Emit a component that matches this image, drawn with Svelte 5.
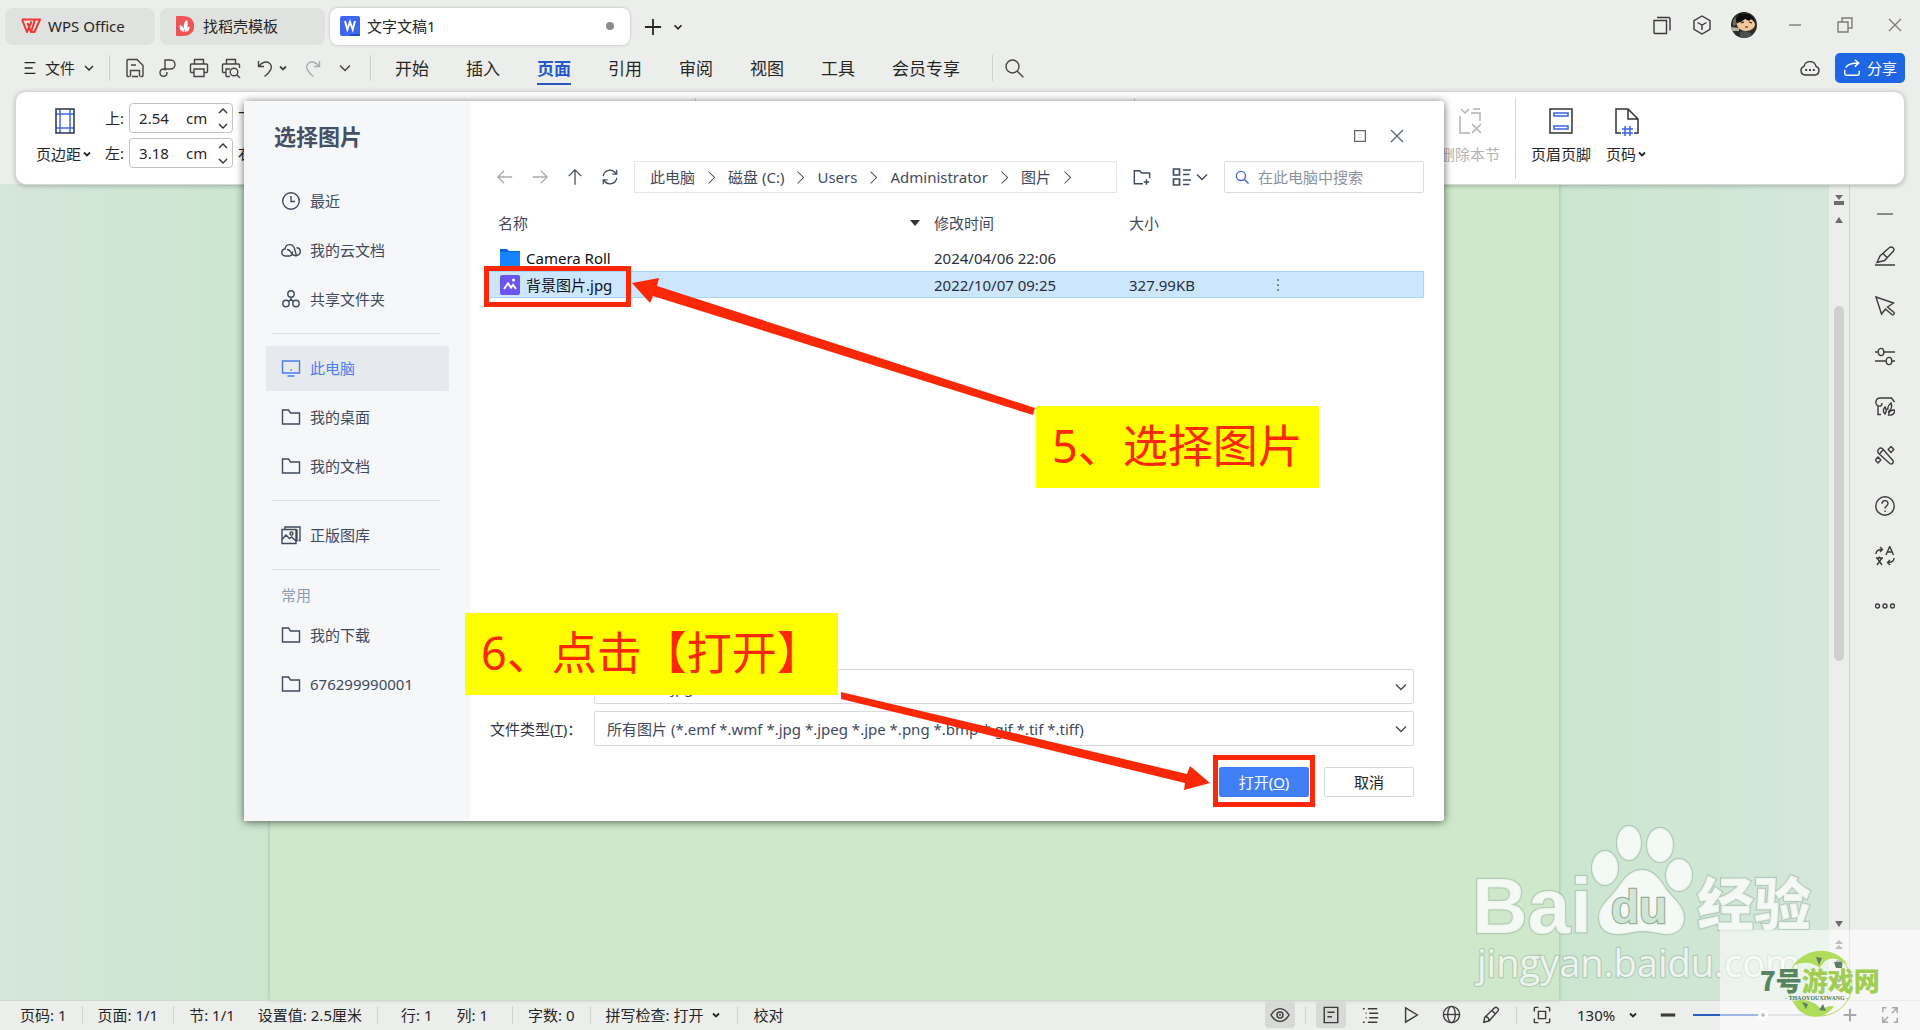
<script lang="ts">
  type SideItem = { icon: string; label: string };

  let activeMenu = 'page';
  let activePlace = '此电脑';
  let fileName = '背景图片.jpg';
  let keyword = '';
  let zoom = 53;
  let top = '2.54';
  let left = '3.18';

  const menus = [
    { id: 'home', label: '开始' },
    { id: 'insert', label: '插入' },
    { id: 'page', label: '页面' },
    { id: 'reference', label: '引用' },
    { id: 'review', label: '审阅' },
    { id: 'view', label: '视图' },
    { id: 'tools', label: '工具' },
    { id: 'vip', label: '会员专享' }
  ];

  const placeGroups: { title?: string; items: SideItem[] }[] = [
    {
      items: [
        { icon: 'clock', label: '最近' },
        { icon: 'cloud', label: '我的云文档' },
        { icon: 'shared', label: '共享文件夹' }
      ]
    },
    {
      items: [
        { icon: 'monitor', label: '此电脑' },
        { icon: 'folder', label: '我的桌面' },
        { icon: 'folder', label: '我的文档' }
      ]
    },
    { items: [{ icon: 'gallery', label: '正版图库' }] },
    {
      title: '常用',
      items: [
        { icon: 'folder', label: '我的下载' },
        { icon: 'folder', label: '676299990001' }
      ]
    }
  ];

  const crumbs = ['此电脑', '磁盘 (C:)', 'Users', 'Administrator', '图片'];

  const files = [
    { kind: 'dir', name: 'Camera Roll', date: '2024/04/06 22:06', size: '', selected: false },
    { kind: 'img', name: '背景图片.jpg', date: '2022/10/07 09:25', size: '327.99KB', selected: true }
  ];

  const sideTools = [
    { icon: 'collapse', label: '收起' },
    { icon: 'highlighter', label: '样式' },
    { icon: 'cursor', label: '选择' },
    { icon: 'sliders', label: '属性' },
    { icon: 'leaf', label: '素材' },
    { icon: 'wand', label: '工具' },
    { icon: 'help', label: '帮助' },
    { icon: 'translate', label: '翻译' },
    { icon: 'more', label: '更多' }
  ];

  // every icon is drawn on a 20x20 grid
  const icons: Record<string, string> = {
    menu: '<path d="M4 4h12M4 10h9M4 16h12"/>',
    chev: '<path d="M5 7.500l5 5 5-5"/>',
    chevRight: '<path d="M6 2l8 8-8 8"/>',
    save: '<path d="M4.500 18.500H3a1 1 0 0 1-1-1v-15a1 1 0 0 1 1-1h9l6 6v10a1 1 0 0 1-1 1h-1.500M5.500 18.500v-6h9v6M6 7h5M7 18.500h6"/>',
    output: '<path d="M8 12.500V2h5.500a4.500 4.500 0 0 1 0 9H6.500a3.500 3.500 0 0 0-3.500 3.700c0 5 7 4.500 7 0V14"/>',
    print: '<path d="M5.500 6V1.500h9V6M5 14.500H2.500a1 1 0 0 1-1-1V7a1 1 0 0 1 1-1h15a1 1 0 0 1 1 1v6.500a1 1 0 0 1-1 1H15M5 11h10v7.500H5z"/>',
    preview: '<path d="M5.500 6V1.500h9V6M5 14.500H2.500a1 1 0 0 1-1-1V7a1 1 0 0 1 1-1h15a1 1 0 0 1 1 1v3M5 18.500V11h4M5 18.500h4"/><circle cx="13" cy="14" r="3.800"/><path d="M16 17l3 3"/>',
    undo: '<path d="M3.500 3v5.500H9M4 8.200C7 4 11.500 2.800 14.500 5.200c4.500 4 0 9.300-5 13.300"/>',
    redo: '<path d="M16.500 3v5.500H11M16 8.200C13 4 8.500 2.800 5.500 5.200c-4.500 4 0 9.300 5 13.300"/>',
    search: '<circle cx="8.500" cy="8.500" r="6.500"/><path d="M13.300 13.300l6 6"/>',
    plus: '<path d="M10 1v18M1 10h18"/>',
    windows: '<path d="M2 5.500h12.500v13H3a1 1 0 0 1-1-1zM5 2.500h12a1 1 0 0 1 1 1v12"/>',
    cube: '<path d="M10 1l8 4.700v8.600L10 19l-8-4.700V5.700zM5.500 7.500L10 10l4.500-2.500M10 10v5"/>',
    minus: '<path d="M4 10h12"/>',
    restore: '<path d="M3 7h10v10H3zM7 7V3h10v10h-4"/>',
    close: '<path d="M4 4l12 12M16 4L4 16"/>',
    square: '<path d="M4 4h12v12H4z"/>',
    cloudDots: '<path d="M5 17a4.500 4.500 0 0 1-1-8.700 6.200 6.200 0 0 1 12 0A4.500 4.500 0 0 1 15 17z"/><path d="M5.300 12h1.800M9.100 12h1.800M12.900 12h1.800" stroke-width="2"/>',
    share: '<path d="M2 12v4.500a1.500 1.500 0 0 0 1.500 1.500h13a1.500 1.500 0 0 0 1.500-1.500V13M3 9.500C5 6 9 4.500 17.500 4.500M13 .8l4.500 3.700L13 8.500"/>',
    clock: '<circle cx="10" cy="10" r="8.300"/><path d="M10 5v5.500h4"/>',
    cloud: '<path d="M8.500 16H4.200C-.3 15.500-.3 9.500 4 9c1-5.500 7.500-6 9.500-.5L15.500 16M8.500 16c3 0 3-2.500 3-4.500M6 9.500c2 0 3 1 4 3 1.500 3 4 3.500 6 3 4.500-1 4.500-7.500-.5-7.700"/>',
    shared: '<circle cx="10" cy="5" r="3.200"/><circle cx="5" cy="14.500" r="3.200"/><circle cx="15" cy="14.500" r="3.200"/><path d="M10 8.200v2L7.500 12.500M10 10.200l2.500 2.300"/>',
    monitor: '<path d="M1.500 3h17v12h-17zM6.500 18h7"/><path d="M9.500 12h1.500"/>',
    folder: '<path d="M1.500 17V3h6l2 3h9v11z"/>',
    gallery: '<path d="M1 4.500h14v14H1zM4 4.500V2h15v13.500h-1.500M16 4.500v12M1 14.500l4-4.500 3.500 3.500 2-1.500 4.500 4"/><circle cx="10.500" cy="8.500" r="1.500"/>',
    back: '<path d="M18 10H2M9 3l-7 7 7 7"/>',
    forward: '<path d="M2 10h16M11 3l7 7-7 7"/>',
    up: '<path d="M10 18.500V2M3 9l7-7 7 7"/>',
    refresh: '<path d="M2.500 9A7.600 7.600 0 0 1 16.500 6M17.500 2v4.800h-4.800M17.500 11A7.600 7.600 0 0 1 3.500 14M2.500 18v-4.800h4.800"/>',
    newFolder: '<path d="M11 17.500H1.500V3h6l2 2.500h9v6M15 12.500v6M12 15.500h6"/>',
    grid: '<path d="M1.500 2h6v6h-6zM1.500 12h6v6h-6zM11 3h8M11 7.500h6.500M11 13h8M11 17.500h6.500" stroke-width="1.700"/>',
    collapse: '<path d="M2 10h16" stroke-width="2"/>',
    highlighter: '<path d="M0 19h20M2 16.500L5 10 14.500 1.500c2.500-1.500 5.500 1 4 3.500L9.500 14.500 2 16.500zM8 7.500l4.500 4.500"/>',
    cursor: '<path d="M1 1l17.500 6-6 4 6.500 5.500c.8 1.500-1 3-2.200 2L10.500 13l-4 5z"/>',
    sliders: '<path d="M0 6h3M9 6h11M0 15h11M17 15h3"/><ellipse cx="6" cy="6" rx="2.800" ry="3.600"/><ellipse cx="14" cy="15" rx="2.800" ry="3.600"/>',
    leaf: '<path d="M6 18.500H3V10C-.5 8 .5 2 5 2h11.500l3 4M3 10c3 .5 4-.5 4-3M10 18c-3-2.500-1-6 0-7 2 3 1.500 5 0 7zM13 14c-1-3 .5-5 3-7 1.500 4 0 7-3 9M13.500 19c0-3 2-5 6.500-5-.5 3.500-3 5.500-6.500 5z"/>',
    wand: '<path d="M3.500 3.500c1-1.800 3-1.800 4-.7L17.500 14c2 2.500-.5 5-2.700 3.500L3.700 7.500c-1-1-1-2.800-.2-4zM4.500 8L8 4M16 .5l2.800 3L16 6.500l-2.800-3zM3 11l2.800 3L3 17 .2 14z"/>',
    help: '<circle cx="10" cy="10" r="9.200"/><path d="M7 7.800C7 3.500 13 3.700 13 7.500c0 2.500-3 2.500-3 5M10 14.500v1.500"/>',
    translate: '<path d="M11 9l3.700-8.500L18.500 9M12.500 6h4.500M1 8c0-3 2-4.500 6-4.500M5 1l2.500 2.500L5 6M19 12c0 3-2 4.500-6 4.500M15 14l-2.500 2.500L15 19M1 12h7M4.500 10.500V12M2 19l5-7M7 19l-5-7"/>',
    more: '<circle cx="2.500" cy="10" r="2"/><circle cx="10" cy="10" r="2"/><circle cx="17.500" cy="10" r="2"/>',
    eye: '<path d="M1 10c5-8.500 13-8.500 18 0-5 8.500-13 8.500-18 0z"/><circle cx="10" cy="10" r="3"/><path d="M10 9v2"/>',
    doc: '<path d="M2.500 1.500h15v17h-15zM6 7h8M6 12h5"/>',
    list: '<path d="M1 3h2M6.500 3H17M4 8h1M8 8h10M4 13h1M8 13h10M1 18h2M6.500 18H17"/>',
    play: '<path d="M4 2l13 8-13 8z"/>',
    globe: '<circle cx="10" cy="10" r="8.500"/><ellipse cx="10" cy="10" rx="4" ry="8.500"/><path d="M1.500 10h17"/>',
    pen: '<path d="M2 18l1-5.500L14 2c2-1.500 5 1 4 3.200L8 16.500 2 18zM3.500 12c2.500-.5 4 1.500 4 4M11 5l4 4"/>',
    fit: '<path d="M1.500 6V2.500a1 1 0 0 1 1-1H6M14 1.500h3.500a1 1 0 0 1 1 1V6M18.500 14v3.500a1 1 0 0 1-1 1H14M6 18.500H2.500a1 1 0 0 1-1-1V14M6 6h8v8H6z"/>',
    full: '<path d="M12 2h6v6M18 2l-6 6M8 18H2v-6M2 18l6-6M2 7V2h4M18 13v5h-4"/>'
  };
</script>

{#snippet icon(name: string, size = 20, stroke = 1.4)}
  <svg class="icon" width={size} height={size} viewBox="0 0 20 20" stroke-width={stroke} aria-hidden="true">
    {@html icons[name]}
  </svg>
{/snippet}

<div class="app">
  <header class="titlebar">
    <div class="tabs">
      <button class="tab tab-home">
        <svg width="20" height="16" viewBox="0 0 20 16" aria-hidden="true">
          <path d="M1 1.500h13L10 14 6.500 5M1 1.500L6 14 10.500 3.500M10 14h3.500L19 1.500h-5" fill="none" stroke="#ee3a30" stroke-width="2" stroke-linejoin="round" />
        </svg>
        WPS Office
      </button>
      <button class="tab tab-store">
        <svg width="18" height="20" viewBox="0 0 18 20" aria-hidden="true">
          <path d="M1 0h6c15 0 15 20 0 20H1a1 1 0 0 1-1-1V1a1 1 0 0 1 1-1z" fill="#ec5458" />
          <path d="M8.500 16C4 15 3 12 4 9c3 1 4.500 3 4.500 7zM8.500 14C7 9 8 6 11 4c1.500 4 1 8-2.500 10zM9 16c0-3 1.500-4.500 4.500-5.500.5 3-1 5-4.500 5.500z" fill="#fff" />
        </svg>
        找稻壳模板
      </button>
      <button class="tab tab-doc">
        <svg width="20" height="20" viewBox="0 0 20 20" aria-hidden="true">
          <rect width="20" height="20" rx="2" fill="#3f66ee" />
          <path d="M10 18h10v2H10z" fill="#254bc4" />
          <path d="M5 5l2.300 8.500L10 6l2.700 7.500L15 5" fill="none" stroke="#fff" stroke-width="2" />
        </svg>
        文字文稿1
        <span class="unsaved"></span>
      </button>
      <button class="tab-add" aria-label="新建">{@render icon('plus', 18, 2)}</button>
      <button class="tab-add" aria-label="标签列表">{@render icon('chev', 14, 2.4)}</button>
    </div>
    <div class="window-tools">
      <button class="tool" aria-label="窗口">{@render icon('windows', 20)}</button>
      <button class="tool" aria-label="应用">{@render icon('cube', 20)}</button>
      <svg class="avatar" width="26" height="26" viewBox="0 0 26 26" role="img" aria-label="头像">
        <clipPath id="face"><circle cx="13" cy="13" r="13" /></clipPath>
        <g clip-path="url(#face)">
          <path d="M0 0h26v26H0z" fill="#2c2d2b" />
          <path d="M0 15l8 1v3H0z" fill="#b9b2a4" />
          <path d="M2 8l4-4 1 8-5 2z" fill="#6d6b55" />
          <ellipse cx="15" cy="12.500" rx="9" ry="6.500" fill="#f3c79a" />
          <path d="M5 9C4 3 10 0 15 2c5 0 8 3 9 8l-4-3-2 2-4-2-4 3-4 1z" fill="#0d0d0d" />
          <path d="M10 11l3-1M18 10l3 1M14 15l3 0" stroke="#222" stroke-width="1.200" />
          <path d="M9 20l5-1 6 2v5H9z" fill="#4d4f50" />
        </g>
      </svg>
      <button class="win" aria-label="最小化">{@render icon('minus', 20)}</button>
      <button class="win" aria-label="还原">{@render icon('restore', 20)}</button>
      <button class="win" aria-label="关闭">{@render icon('close', 20)}</button>
    </div>
  </header>

  <div class="menubar">
    <button class="file-menu">{@render icon('menu', 18, 1.6)}文件{@render icon('chev', 16, 1.6)}</button>
    <span class="sep"></span>
    <div class="quick">
      <button aria-label="保存">{@render icon('save')}</button>
      <button aria-label="输出为PDF">{@render icon('output')}</button>
      <button aria-label="打印">{@render icon('print')}</button>
      <button aria-label="打印预览">{@render icon('preview')}</button>
      <button class="undo" aria-label="撤销">{@render icon('undo')}{@render icon('chev', 12, 3)}</button>
      <button class="faded" aria-label="恢复">{@render icon('redo')}</button>
      <button aria-label="更多命令">{@render icon('chev', 20, 1.4)}</button>
    </div>
    <span class="sep"></span>
    <nav class="menus">
      {#each menus as menu (menu.id)}
        <button class:active={menu.id === activeMenu} on:click={() => (activeMenu = menu.id)}>{menu.label}</button>
      {/each}
    </nav>
    <span class="sep"></span>
    <button class="find" aria-label="搜索">{@render icon('search')}</button>
    <div class="menubar-end">
      <button class="tool" aria-label="云同步">{@render icon('cloudDots')}</button>
      <button class="share">{@render icon('share', 18, 1.6)}分享</button>
    </div>
  </div>

  <section class="ribbon">
    <div class="group group-margins">
      <button class="big">
        <svg width="20" height="26" viewBox="0 0 20 26" fill="none" aria-hidden="true">
          <path d="M5 1v24M15 1v24M1 6h18M1 20h18" stroke="#4169e1" stroke-width="1.500" />
          <path d="M1 1h18v24H1z" stroke="#2d3350" stroke-width="1.500" />
        </svg>
        <span>页边距{@render icon('chev', 12, 3)}</span>
      </button>
      <div class="margins">
        <label for="m-top">上:</label>
        <div class="spin">
          <input id="m-top" bind:value={top} /><span>cm</span>
          <div class="steps">
            <button aria-label="增大上边距"><svg width="10" height="6" viewBox="0 0 10 6"><path d="M1 5l4-4 4 4" /></svg></button>
            <button aria-label="减小上边距"><svg width="10" height="6" viewBox="0 0 10 6"><path d="M1 1l4 4 4-4" /></svg></button>
          </div>
        </div>
        <span>下:</span>
        <label for="m-left">左:</label>
        <div class="spin">
          <input id="m-left" bind:value={left} /><span>cm</span>
          <div class="steps">
            <button aria-label="增大左边距"><svg width="10" height="6" viewBox="0 0 10 6"><path d="M1 5l4-4 4 4" /></svg></button>
            <button aria-label="减小左边距"><svg width="10" height="6" viewBox="0 0 10 6"><path d="M1 1l4 4 4-4" /></svg></button>
          </div>
        </div>
        <span>右:</span>
      </div>
    </div>
    <div class="group group-paper"></div>
    <div class="group group-section">
      <button class="big" disabled>
        <svg width="24" height="26" viewBox="0 0 24 26" fill="none" stroke="currentColor" stroke-width="1.500" aria-hidden="true">
          <path d="M3 1l4 4 4-4M15 1h7M13 5h9v8M2 8v17h10M14 16l9 9M23 16l-9 9" />
        </svg>
        <span>删除本节</span>
      </button>
    </div>
    <div class="group">
      <button class="big">
        <svg width="24" height="26" viewBox="0 0 24 26" fill="none" stroke-width="1.500" aria-hidden="true">
          <path d="M1 1h22v24H1z" stroke="#333" />
          <path d="M5 5h14v3H5zM5 18h14v3H5z" stroke="#3b61e6" />
        </svg>
        <span>页眉页脚</span>
      </button>
      <button class="big">
        <svg width="24" height="26" viewBox="0 0 24 26" fill="none" stroke-width="1.500" overflow="visible" aria-hidden="true">
          <path d="M6 25H1V1h12l10 10v14h-4M13 1v10h10" stroke="#333" />
          <path d="M10 18v10M15 18v10M7 21h11M7 25h11" stroke="#3b61e6" />
        </svg>
        <span>页码{@render icon('chev', 12, 3)}</span>
      </button>
    </div>
  </section>

  <main class="workspace">
    <div class="canvas"><div class="sheet"></div></div>
    <div class="scrollbar">
      <svg width="12" height="12" viewBox="0 0 12 12"><path d="M2 1h8L6 6zM1 7h10v4H1z" /></svg>
      <svg width="12" height="12" viewBox="0 0 12 12"><path d="M2 9l4-6 4 6z" /></svg>
      <span class="thumb"></span>
      <svg class="to-end" width="12" height="12" viewBox="0 0 12 12"><path d="M2 3h8L6 9z" /></svg>
      <svg width="12" height="12" viewBox="0 0 12 12"><path d="M2 6l4-4 4 4zM2 11l4-4 4 4z" /></svg>
      <svg width="12" height="12" viewBox="0 0 12 12"><circle cx="6" cy="6" r="4" /></svg>
      <svg width="12" height="12" viewBox="0 0 12 12"><path d="M2 1l4 4 4-4zM2 6l4 4 4-4z" /></svg>
    </div>
    <aside class="side-tools">
      {#each sideTools as tool (tool.icon)}
        <button aria-label={tool.label}>{@render icon(tool.icon)}</button>
      {/each}
    </aside>
  </main>

  <footer class="status">
    <span>页码: 1</span><i></i>
    <span>页面: 1/1</span><i></i>
    <span>节: 1/1</span>
    <span class="loose">设置值: 2.5厘米</span><i></i>
    <span class="loose">行: 1</span>
    <span class="column">列: 1</span><i></i>
    <span>字数: 0</span><i></i>
    <button class="spell">拼写检查: 打开{@render icon('chev', 12, 3)}</button><i></i>
    <button>校对</button>
    <div class="view-tools">
      <button class="view on" aria-label="护眼模式">{@render icon('eye')}</button>
      <i></i>
      <button class="view on" aria-label="页面视图">{@render icon('doc', 18, 1.6)}</button>
      <button class="view" aria-label="大纲">{@render icon('list', 18, 1.6)}</button>
      <button class="view" aria-label="阅读版式">{@render icon('play', 18, 1.6)}</button>
      <button class="view" aria-label="Web版式">{@render icon('globe', 19)}</button>
      <button class="view" aria-label="写作模式">{@render icon('pen', 18, 1.6)}</button>
      <i></i>
      <button class="view" aria-label="最佳显示比例">{@render icon('fit', 18, 1.6)}</button>
      <button class="percent">130%{@render icon('chev', 12, 3)}</button>
      <button class="view" aria-label="缩小">{@render icon('minus', 24, 2.6)}</button>
      <input class="slider" type="range" aria-label="显示比例" bind:value={zoom} style="--fill: {zoom}%" />
      <button class="view" aria-label="放大">{@render icon('plus', 14, 3)}</button>
      <button class="view" aria-label="全屏">{@render icon('full', 18, 1.6)}</button>
    </div>
  </footer>

  <div class="dialog" role="dialog" aria-labelledby="dialog-title">
    <aside class="places">
      <h1 id="dialog-title">选择图片</h1>
      {#each placeGroups as group}
        <section>
          {#if group.title}
            <h2>{group.title}</h2>
          {/if}
          {#each group.items as item (item.label)}
            <button class="place" class:current={item.label === activePlace} on:click={() => (activePlace = item.label)}>
              {@render icon(item.icon)}{item.label}
            </button>
          {/each}
        </section>
      {/each}
    </aside>

    <div class="browser">
      <div class="dialog-controls">
        <button aria-label="最大化">{@render icon('square', 18)}</button>
        <button aria-label="关闭">{@render icon('close', 20)}</button>
      </div>

      <div class="nav">
        <button class="nav-btn faded" aria-label="后退">{@render icon('back', 18)}</button>
        <button class="nav-btn faded" aria-label="前进">{@render icon('forward', 18)}</button>
        <button class="nav-btn" aria-label="向上">{@render icon('up', 18, 1.4)}</button>
        <button class="nav-btn" aria-label="刷新">{@render icon('refresh', 18, 1.4)}</button>
        <div class="crumbs">
          {#each crumbs as crumb}
            <button>{crumb}</button>{@render icon('chevRight', 15, 1.4)}
          {/each}
        </div>
        <button class="nav-btn new-folder" aria-label="新建文件夹">{@render icon('newFolder', 18, 1.6)}</button>
        <button class="layout" aria-label="视图">{@render icon('grid')}{@render icon('chev', 20, 1.4)}</button>
        <div class="search">
          <label for="keyword" aria-label="搜索">{@render icon('search', 14, 2)}</label>
          <input id="keyword" placeholder="在此电脑中搜索" bind:value={keyword} />
        </div>
      </div>

      <div class="files">
        <table>
          <thead>
            <tr>
              <th class="c-name"><div>名称<svg width="10" height="6" viewBox="0 0 10 6"><path d="M0 0h10L5 6z" /></svg></div></th>
              <th class="c-date">修改时间</th>
              <th class="c-size">大小</th>
              <th class="c-more"></th>
            </tr>
          </thead>
          <tbody>
            {#each files as file (file.name)}
              <tr class:selected={file.selected}>
                <td class="c-name">
                  <div>
                    {#if file.kind === 'dir'}
                      <svg width="20" height="20" viewBox="0 0 20 20"><path d="M0 1h7l2 2h11v17H0z" fill="#0b63d8" /><path d="M0 4h20v16H0z" fill="#1484ff" /></svg>
                    {:else}
                      <svg width="20" height="20" viewBox="0 0 20 20"><rect width="20" height="20" rx="2" fill="#6a55f2" /><path d="M4 14l4-5.500 3 4 2-2.500 3 4" fill="none" stroke="#fff" stroke-width="2" /><circle cx="13.500" cy="5" r="1.500" fill="#fff" /></svg>
                    {/if}
                    {file.name}
                  </div>
                </td>
                <td>{file.date}</td>
                <td>{file.size}</td>
                <td class="c-more">
                  {#if file.selected}
                    <svg width="4" height="14" viewBox="0 0 4 14"><path d="M1 1h2v2H1zM1 6h2v2H1zM1 11h2v2H1z" /></svg>
                  {/if}
                </td>
              </tr>
            {/each}
          </tbody>
        </table>
      </div>

      <form class="form" on:submit|preventDefault>
        <div class="field">
          <input aria-label="文件名称" bind:value={fileName} />
          {@render icon('chev', 20, 1.4)}
        </div>
        <label for="file-type">文件类型(<u>T</u>)：</label>
        <div class="field">
          <select id="file-type">
            <option>所有图片 (*.emf *.wmf *.jpg *.jpeg *.jpe *.png *.bmp *.gif *.tif *.tiff)</option>
          </select>
          {@render icon('chev', 20, 1.4)}
        </div>
        <div class="actions">
          <button class="btn primary" type="submit">打开(<u>O</u>)</button>
          <button class="btn" type="button">取消</button>
        </div>
      </form>
    </div>

    <div class="mark mark-file"></div>
    <div class="mark mark-open"></div>
    <svg class="arrows" width="1200" height="720" viewBox="0 0 1200 720" aria-hidden="true">
      <path d="M388 182l27-5-2 8 378 122-2 7-380-119-3 7z" />
      <path d="M597 591l346 82 3-8 20 17-26 7 1-7-344-84z" />
    </svg>
    <div class="callout callout-pick">5、选择图片</div>
    <div class="callout callout-open">6、点击【打开】</div>
  </div>

  <svg class="watermark" width="480" height="230" viewBox="0 0 480 230" aria-hidden="true">
    <g fill="#fff" fill-opacity=".76" stroke="#8aa392" stroke-opacity=".4" stroke-width="2.400" paint-order="stroke">
      <text class="latin" x="32" y="133" font-size="77">Bai</text>
      <ellipse cx="165" cy="68" rx="13" ry="17" />
      <ellipse cx="189" cy="43" rx="12" ry="17" />
      <ellipse cx="220" cy="45" rx="13" ry="17" />
      <ellipse cx="239" cy="75" rx="13" ry="16" />
      <path d="M202 70c12 0 18 10 24 19s18 16 18 29c0 12-10 17-20 16-8-1-14-3-22-3s-14 3-22 3c-12 1-21-5-21-16 0-13 11-19 18-29s13-19 25-19z" />
      <text class="latin" x="171" y="123" font-size="46" fill="#cfe5d6" fill-opacity="1" stroke-opacity=".9">du</text>
      <text class="han" x="257" y="125" font-size="57">经验</text>
      <text class="url" x="37" y="177" font-size="38">jingyan.baidu.com</text>
    </g>
    <path d="M280 130h200v100H280z" fill="#fff" fill-opacity=".55" />
    <circle cx="380" cy="184" r="32" fill="none" stroke="#b3dc62" stroke-width="1" />
    <path d="M353 166c14-20 42-20 55-1-12-9-22-9-28 3-8-6-17-7-27-2zM353 201c12-3 22 0 29 9 5-4 7-4 12-4-9 15-33 15-41-5z" fill="#b0dc5c" />
    <path d="M376 157l6 1-3 7zM394 162h8v6h-6zM362 202l6 2-2 5zM379 210l4-6 3 7z" fill="#5c8065" />
    <text class="brand" x="320" y="191" font-size="26"><tspan fill="#568462">7号</tspan><tspan fill="#9fce52">游戏网</tspan></text>
    <text class="brand-sub" x="345" y="200" font-size="6">- THAOYOUXIWANG -</text>
  </svg>
</div>

<style>
  :global(body) {
    margin: 0;
    background: #eceeeb;
  }

  .app {
    position: relative;
    min-height: 100vh;
    display: flex;
    flex-direction: column;
    overflow: hidden;
    background: #eceeeb;
    color: #262626;
    font: 15px/20px 'Noto Sans', 'Noto Sans CJK SC', sans-serif;
  }

  button,
  input,
  select {
    margin: 0;
    padding: 0;
    border: 0;
    background: none;
    color: inherit;
    font: inherit;
  }

  button {
    display: flex;
    align-items: center;
    justify-content: center;
    white-space: nowrap;
  }

  svg {
    flex: none;
  }

  .icon {
    display: block;
    fill: none;
    stroke: currentColor;
  }

  .titlebar {
    display: flex;
    justify-content: space-between;
    height: 45px;
  }

  .tabs {
    display: flex;
    gap: 5px;
    padding: 8px 0 0 5px;
  }

  .tab {
    height: 37px;
    justify-content: flex-start;
    gap: 7px;
    padding: 0 16px 1px;
    border-radius: 8px;
    background: #e0e2df;
  }

  .tab-home {
    width: 150px;
  }

  .tab-store {
    width: 165px;
    gap: 9px;
  }

  .tab-doc {
    width: 300px;
    padding: 0 16px 1px 10px;
    background: #fff;
    box-shadow: 0 0 3px rgba(0, 0, 0, 0.25);
  }

  .unsaved {
    width: 8px;
    height: 8px;
    margin-left: auto;
    border-radius: 50%;
    background: #8c8c8c;
  }

  .tab-add {
    margin-left: 9px;
  }

  .tab-add + .tab-add {
    margin-left: 4px;
  }

  .window-tools {
    display: flex;
    align-items: center;
    height: 50px;
  }

  .tool {
    width: 40px;
    height: 30px;
    color: #3a3a3a;
  }

  .avatar {
    margin: 0 13px 0 9px;
  }

  .win {
    width: 50px;
    height: 40px;
    color: #7c7c7c;
  }

  .menubar {
    display: flex;
    align-items: center;
    height: 46px;
    padding: 0 15px 0 21px;
  }

  .file-menu {
    gap: 6px;
  }

  .sep {
    width: 1px;
    height: 26px;
    background: #cfd1ce;
  }

  .file-menu + .sep {
    margin: 0 9px 0 12px;
  }

  .quick {
    display: flex;
    margin-right: 9px;
    color: #444;
  }

  .quick button {
    width: 32px;
    height: 30px;
  }

  .quick .undo {
    width: 50px;
    gap: 2px;
  }

  .faded {
    color: #a9abac;
  }

  .menus {
    display: flex;
    gap: 37px;
    margin: 0 32px 0 24px;
    font-size: 17px;
  }

  .menus button {
    height: 34px;
    border-bottom: 2px solid transparent;
    border-top: 4px solid transparent;
  }

  .menus .active {
    border-bottom-color: #2a57b8;
    color: #2458cc;
    font-weight: 700;
  }

  .find {
    margin-left: 11px;
    color: #444;
  }

  .menubar-end {
    display: flex;
    align-items: center;
    gap: 5px;
    margin-left: auto;
  }

  .share {
    width: 70px;
    height: 30px;
    gap: 6px;
    border-radius: 5px;
    background: #1f66e5;
    color: #fff;
  }

  .ribbon {
    z-index: 1;
    display: flex;
    box-sizing: border-box;
    height: 94px;
    margin: 0 15px;
    padding: 6px 0 5px;
    border: 1px solid #d7d9d6;
    border-radius: 11px;
    background: #fff;
    box-shadow: 0 1px 4px rgba(0, 0, 0, 0.25);
  }

  .group {
    display: flex;
    align-items: flex-start;
    gap: 15px;
    padding: 10px 15px;
    border-right: 1px solid #d5d7d8;
  }

  .group:last-child {
    border: 0;
  }

  .group-margins {
    box-sizing: border-box;
    width: 680px;
    padding: 5px 20px;
    gap: 12px;
  }

  .group-margins .big {
    margin-top: 5px;
  }

  .group-paper {
    box-sizing: border-box;
    width: 439px;
  }

  .group-section {
    box-sizing: border-box;
    width: 381px;
    justify-content: flex-end;
  }

  .big {
    flex-direction: column;
    gap: 10px;
  }

  .big:disabled {
    color: #b3b3b3;
  }

  .big span {
    display: flex;
    align-items: center;
  }

  .margins {
    display: grid;
    grid-template-columns: auto 104px auto;
    align-items: center;
    gap: 5px;
  }

  .spin {
    display: flex;
    align-items: center;
    box-sizing: border-box;
    height: 30px;
    padding: 0 4px 0 9px;
    border: 1px solid #bfc1c4;
    border-radius: 4px;
  }

  .spin input {
    width: 47px;
  }

  .steps {
    display: flex;
    flex-direction: column;
    gap: 9px;
    margin-left: auto;
  }

  .steps path {
    fill: none;
    stroke: #333;
    stroke-width: 1.4;
  }

  .workspace {
    flex: 1;
    display: flex;
    margin-top: -1px;
  }

  .canvas {
    flex: 1;
    display: flex;
    justify-content: center;
    background: linear-gradient(90deg, #d5e6da, #cbe6cf 14%, #cbe6d0 86%, #d5e7da);
  }

  .sheet {
    width: 70.5%;
    background: #cfe8cb;
    box-shadow: 0 0 4px rgba(90, 110, 90, 0.4);
  }

  .scrollbar {
    width: 20px;
    display: flex;
    flex-direction: column;
    align-items: center;
    gap: 8px;
    padding: 10px 0;
    border-right: 1px solid #cfd1ce;
  }

  .scrollbar svg {
    fill: #6e6e6e;
  }

  .thumb {
    width: 10px;
    height: 355px;
    margin-top: 72px;
    border-radius: 5px;
    background: #cfd1ce;
  }

  .to-end {
    margin-top: auto;
  }

  .side-tools {
    width: 70px;
    display: flex;
    flex-direction: column;
    align-items: center;
    padding-top: 12px;
    color: #3c3c3c;
  }

  .side-tools button {
    width: 50px;
    height: 50px;
  }

  .side-tools button:first-child {
    height: 35px;
    color: #8a8a8a;
  }

  .status {
    display: flex;
    align-items: center;
    box-sizing: border-box;
    height: 30px;
    padding: 0 15px 2px 20px;
    border-top: 1px solid #d2d6d1;
    white-space: nowrap;
  }

  .status i {
    width: 1px;
    height: 18px;
    margin: 0 15px;
    background: #d0d2cf;
  }

  .loose {
    margin-left: 23px;
  }

  i + .loose {
    margin-left: 8px;
  }

  .column {
    margin: 0 9px 0 24px;
  }

  .spell {
    gap: 7px;
  }

  .view-tools {
    display: flex;
    align-items: center;
    gap: 10px;
    height: 100%;
    margin-left: auto;
  }

  .view-tools i {
    margin: 0;
  }

  .view {
    width: 30px;
    height: 27px;
    color: #3c3c3c;
  }

  .view.on {
    border-radius: 4px;
    background: #d8dad7;
  }

  .percent {
    width: 76px;
    padding-left: 10px;
    box-sizing: border-box;
    gap: 12px;
    justify-content: flex-start;
  }

  .slider {
    appearance: none;
    width: 132px;
    height: 12px;
  }

  .slider::-webkit-slider-runnable-track {
    height: 2px;
    background: linear-gradient(90deg, #2a5fc4 var(--fill), #c2c4c6 var(--fill));
  }

  .slider::-webkit-slider-thumb {
    appearance: none;
    width: 10px;
    height: 10px;
    margin-top: -4px;
    border: 3px solid #fff;
    border-radius: 50%;
    background: #7d7d7d;
  }

  .dialog {
    position: absolute;
    z-index: 2;
    top: 101px;
    left: 244px;
    width: 1200px;
    min-height: 720px;
    display: flex;
    border-radius: 3px;
    background: #fff;
    box-shadow: 0 1px 9px rgba(0, 0, 0, 0.6);
    color: #3f4a5e;
  }

  .places {
    box-sizing: border-box;
    width: 226px;
    padding: 22px 21px 0 22px;
    background: #f5f7f9;
  }

  h1 {
    margin: 0 0 30px 8px;
    color: #435066;
    font-size: 22px;
    line-height: 26px;
  }

  .places section {
    position: relative;
    display: flex;
    flex-direction: column;
    gap: 4px;
    padding-bottom: 24px;
  }

  .places section:not(:last-child)::after {
    content: '';
    position: absolute;
    right: 9px;
    bottom: 12px;
    left: 6px;
    height: 1px;
    background: #dde1e6;
  }

  h2 {
    margin: 3px 0 4px 15px;
    color: #8d9bb0;
    font-weight: 400;
    font-size: 15px;
    line-height: 20px;
  }

  .place {
    height: 45px;
    justify-content: flex-start;
    gap: 9px;
    padding: 0 0 2px 15px;
    border-radius: 2px;
  }

  .place.current {
    background: #e6e9ed;
    color: #4a7eec;
  }

  .browser {
    flex: 1;
    min-width: 0;
    display: flex;
    flex-direction: column;
    padding: 10px 20px 24px 15px;
  }

  .dialog-controls {
    display: flex;
    justify-content: flex-end;
    height: 50px;
    padding-right: 9px;
    color: #5c6675;
  }

  .dialog-controls button {
    width: 37px;
  }

  .nav {
    display: flex;
    align-items: center;
    height: 32px;
    padding-left: 2px;
  }

  .nav-btn {
    width: 35px;
    height: 32px;
  }

  .crumbs {
    flex: 1;
    display: flex;
    align-items: center;
    gap: 9px;
    box-sizing: border-box;
    height: 32px;
    margin: 0 7px;
    padding-left: 15px;
    border: 1px solid #e3e6ea;
  }

  .layout {
    width: 65px;
    gap: 0;
  }

  .search {
    display: flex;
    align-items: center;
    gap: 9px;
    box-sizing: border-box;
    width: 200px;
    height: 32px;
    padding: 0 10px;
    border: 1px solid #d9dde2;
    border-radius: 2px;
  }

  .search label {
    color: #4468d8;
  }

  .search input {
    width: 100%;
    min-width: 0;
  }

  .search input::placeholder {
    color: #8b929c;
  }

  .files {
    flex: 1;
    margin-top: 8px;
  }

  table {
    width: 100%;
    border-collapse: collapse;
    table-layout: fixed;
  }

  th,
  td {
    height: 27px;
    padding: 0;
    box-sizing: border-box;
    font-weight: 400;
    text-align: left;
  }

  th {
    height: 43px;
  }

  td {
    color: #2a2f3a;
  }

  .c-name {
    width: 449px;
    padding-left: 15px;
  }

  .c-name div {
    display: flex;
    align-items: center;
    gap: 6px;
  }

  td.c-name {
    color: #111;
  }

  th.c-name {
    padding-left: 13px;
  }

  th.c-name svg {
    margin: 0 14px 0 auto;
    fill: #333;
  }

  .c-date {
    width: 195px;
  }

  .c-size {
    width: 147px;
  }

  .c-more svg {
    display: block;
    fill: #7c8aa0;
  }

  .selected {
    background: #cce6ff;
    outline: 1px solid #a9d4f8;
    outline-offset: -1px;
  }

  .form {
    display: grid;
    grid-template-columns: 99px 1fr;
    align-items: center;
    row-gap: 7px;
    margin: 0 10px 0 0;
    padding-left: 5px;
  }

  .form label {
    color: #2f3644;
    white-space: nowrap;
  }

  .field {
    grid-column: 2;
    display: flex;
    align-items: center;
    box-sizing: border-box;
    height: 35px;
    margin-left: 5px;
    padding: 0 2px 0 12px;
    border: 1px solid #d5dae1;
    border-radius: 2px;
  }

  .field input,
  .field select {
    flex: 1;
    min-width: 0;
    appearance: none;
  }

  .actions {
    grid-column: 2;
    display: flex;
    justify-content: flex-end;
    gap: 15px;
    margin-top: 14px;
  }

  .btn {
    display: block;
    box-sizing: border-box;
    width: 90px;
    height: 30px;
    border: 1px solid #d5dae1;
    border-radius: 2px;
    background: #fff;
    color: #222;
  }

  .btn.primary {
    border-color: #417ff9;
    background: #417ff9;
    color: #fff;
  }

  .mark,
  .callout,
  .arrows {
    position: absolute;
    pointer-events: none;
  }

  .mark {
    box-sizing: border-box;
    border: 5px solid #fb2807;
  }

  .mark-file {
    top: 165px;
    left: 240px;
    width: 147px;
    height: 41px;
  }

  .mark-open {
    top: 654px;
    left: 969px;
    width: 102px;
    height: 52px;
  }

  .arrows {
    top: 0;
    left: 0;
    fill: #fb2807;
  }

  .callout {
    padding: 0 16px 2px;
    background: #ff0;
    color: #fb2807;
    font-size: 45px;
    line-height: 80px;
    white-space: nowrap;
  }

  .callout-pick {
    top: 305px;
    left: 792px;
  }

  .callout-open {
    top: 512px;
    left: 221px;
  }

  .watermark {
    position: absolute;
    z-index: 3;
    right: 0;
    bottom: 0;
    pointer-events: none;
  }

  .latin {
    font-family: 'Liberation Sans', sans-serif;
    font-weight: 700;
  }

  .han,
  .brand {
    font-family: 'Noto Sans CJK SC', sans-serif;
    font-weight: 900;
  }

  .url {
    font-family: 'Open Sans', sans-serif;
  }

  .brand-sub {
    font-family: 'Liberation Serif', serif;
    font-weight: 700;
    fill: #50785a;
  }
</style>
